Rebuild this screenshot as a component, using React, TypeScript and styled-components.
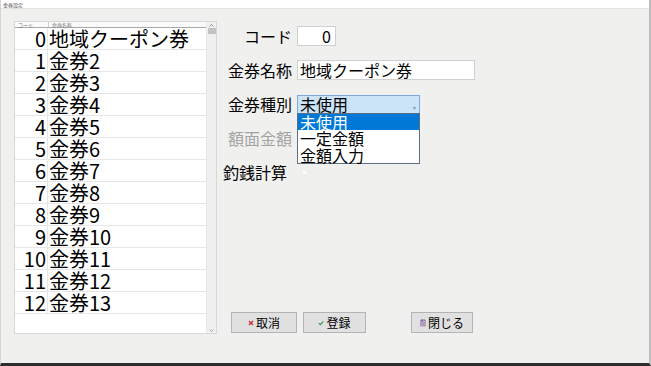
import styled, { createGlobalStyle } from 'styled-components'

const GlobalStyle = createGlobalStyle`
  html, body {
    margin: 0;
    padding: 0;
    background: #f0f0f0;
  }
  * { box-sizing: border-box; }
`

const jp = `"Noto Sans CJK JP", "Noto Sans", sans-serif`

const Window = styled.div`
  width: 651px;
  height: 366px;
  display: flex;
  flex-direction: column;
  background: #f0f0ef;
  border-left: 1px solid #d6d6d6;
  border-right: 2px solid #bdbdbd;
  border-bottom: 3px solid #2e2e2e;
  font-family: ${jp};
  color: #000;
  overflow: hidden;
`

const TitleBar = styled.div`
  height: 9px;
  background: #fff;
  border-bottom: 1px solid #e4e4e4;
  display: flex;
  align-items: center;
  padding-left: 2px;
`

const Title = styled.span`
  font-size: 5px;
  line-height: 5px;
  color: #444;
`

const Body = styled.div`
  flex: 1;
  display: flex;
  padding: 12px 0 0 13px;
`

const ListPanel = styled.div`
  width: 203px;
  height: 313px;
  background: #fff;
  border: 1px solid #d8d8d8;
  display: flex;
`

const ListMain = styled.div`
  flex: 1;
  display: flex;
  flex-direction: column;
`

const HeaderRow = styled.div`
  height: 6px;
  display: flex;
  border-bottom: 1px solid #a8a8a8;
  background: #fafafa;
`

const HeaderCell = styled.div<{ $w?: number }>`
  width: ${p => (p.$w ? `${p.$w}px` : 'auto')};
  flex: ${p => (p.$w ? 'none' : '1')};
  font-size: 5px;
  line-height: 5px;
  color: #777;
  padding-left: 3px;
  border-right: ${p => (p.$w ? '1px solid #cfcfcf' : 'none')};
`

const Row = styled.div`
  height: 22px;
  display: flex;
  border-bottom: 1px solid #e6e6e6;
  font-size: 20px;
  line-height: 21px;
`

const CodeCell = styled.div`
  width: 33px;
  text-align: right;
  padding-right: 1px;
  border-right: 1px solid #e6e6e6;
  font-family: "Liberation Sans Narrow", ${jp};
`

const NameCell = styled.div`
  flex: 1;
  padding-left: 1px;
  white-space: nowrap;
  font-family: "Liberation Sans Narrow", ${jp};
`

const ScrollBar = styled.div`
  width: 10px;
  background: #f0f0f0;
  border-left: 1px solid #e8e8e8;
  display: flex;
  flex-direction: column;
  align-items: center;
`

const ScrollArrow = styled.div`
  height: 6px;
  width: 100%;
  display: flex;
  align-items: center;
  justify-content: center;
`

const ScrollThumb = styled.div`
  width: 8px;
  height: 6px;
  background: #c2c2c2;
`

const ScrollTrack = styled.div`
  flex: 1;
`

const Form = styled.div`
  flex: 1;
  display: flex;
  flex-direction: column;
  padding: 5px 0 30px 4px;
`

const Fields = styled.div`
  display: flex;
  flex-direction: column;
  gap: 14px;
`

const Field = styled.div`
  display: flex;
  align-items: center;
  height: 20px;
  gap: 5px;
`

const Label = styled.div<{ $disabled?: boolean; $inset?: number }>`
  width: 71px;
  text-align: right;
  font-size: 16px;
  white-space: nowrap;
  padding-right: ${p => p.$inset ?? 0}px;
  color: ${p => (p.$disabled ? '#a3a3a3' : '#000')};
`

const TextBox = styled.div<{ $w: number; $right?: boolean }>`
  width: ${p => p.$w}px;
  height: 20px;
  background: #fff;
  border: 1px solid #d0d0d0;
  font-size: 16px;
  line-height: 18px;
  padding: 0 4px 0 2px;
  text-align: ${p => (p.$right ? 'right' : 'left')};
  white-space: nowrap;
`

const Combo = styled.div`
  position: relative;
  width: 123px;
  height: 19px;
  background: #cce4f7;
  border: 1px solid #7fa8d6;
  font-size: 16px;
  line-height: 17px;
  padding-left: 2px;
  display: flex;
  justify-content: space-between;
`

const ComboArrow = styled.span`
  font-size: 6px;
  color: #9a9a9a;
  padding: 3px 3px 0 0;
`

const Popup = styled.div`
  position: absolute;
  top: 17px;
  left: -1px;
  width: 123px;
  background: #fff;
  border: 1px solid #5f6f83;
  z-index: 2;
`

const Option = styled.div<{ $active?: boolean }>`
  height: 16.5px;
  font-size: 16px;
  line-height: 16px;
  padding-left: 2px;
  background: ${p => (p.$active ? '#0078d7' : '#fff')};
  color: ${p => (p.$active ? '#fff' : '#000')};
`

const CheckDot = styled.span`
  width: 3px;
  height: 3px;
  background: #fff;
  margin: 0 0 0 6px;
`

const Buttons = styled.div`
  margin-top: auto;
  display: flex;
  padding-left: 10px;
  gap: 6px;
`

const Button = styled.div<{ $w: number; $gapBefore?: number }>`
  width: ${p => p.$w}px;
  height: 21px;
  margin-left: ${p => p.$gapBefore ?? 0}px;
  background: #e1e1e1;
  border: 1px solid #b4b4b4;
  font-size: 12px;
  display: flex;
  align-items: center;
  justify-content: center;
  gap: 2px;
`

const rows = [
  '地域クーポン券',
  '金券2', '金券3', '金券4', '金券5', '金券6', '金券7',
  '金券8', '金券9', '金券10', '金券11', '金券12', '金券13',
]

const CrossIcon = () => (
  <svg width="6" height="6" viewBox="0 0 6 6">
    <path d="M1 1L5 5M5 1L1 5" stroke="#d22d3a" strokeWidth="1.4" />
  </svg>
)

const CheckIcon = () => (
  <svg width="6" height="6" viewBox="0 0 6 6">
    <path d="M0.8 3.2L2.3 4.7L5.3 1.3" stroke="#2f9a4a" strokeWidth="1.1" fill="none" />
  </svg>
)

const DoorIcon = () => (
  <svg width="6" height="8" viewBox="0 0 6 8">
    <path d="M1 7.5V1H5V7.5" stroke="#6a5a8a" strokeWidth="0.9" fill="none" />
    <path d="M1 1L3 2V7.5" stroke="#7b4fa0" strokeWidth="0.9" fill="none" />
  </svg>
)

const App = () => {
  return (
    <>
      <GlobalStyle />
      <Window>
        <TitleBar>
          <Title>金券設定</Title>
        </TitleBar>
        <Body>
          <ListPanel>
            <ListMain>
              <HeaderRow>
                <HeaderCell $w={34}>コード</HeaderCell>
                <HeaderCell>金券名称</HeaderCell>
              </HeaderRow>
              {rows.map((name, i) => (
                <Row key={i}>
                  <CodeCell>{i}</CodeCell>
                  <NameCell>{name}</NameCell>
                </Row>
              ))}
            </ListMain>
            <ScrollBar>
              <ScrollArrow>
                <svg width="5" height="3" viewBox="0 0 5 3">
                  <path d="M0.5 2.5L2.5 0.5L4.5 2.5" stroke="#777" strokeWidth="0.8" fill="none" />
                </svg>
              </ScrollArrow>
              <ScrollThumb />
              <ScrollTrack />
              <ScrollArrow>
                <svg width="5" height="3" viewBox="0 0 5 3">
                  <path d="M0.5 0.5L2.5 2.5L4.5 0.5" stroke="#999" strokeWidth="0.8" fill="none" />
                </svg>
              </ScrollArrow>
            </ScrollBar>
          </ListPanel>
          <Form>
            <Fields>
              <Field>
                <Label>コード</Label>
                <TextBox $w={39} $right>0</TextBox>
              </Field>
              <Field>
                <Label>金券名称</Label>
                <TextBox $w={178}>地域クーポン券</TextBox>
              </Field>
              <Field>
                <Label>金券種別</Label>
                <Combo>
                  <span>未使用</span>
                  <ComboArrow>▾</ComboArrow>
                  <Popup>
                    <Option $active>未使用</Option>
                    <Option>一定金額</Option>
                    <Option>金額入力</Option>
                  </Popup>
                </Combo>
              </Field>
              <Field>
                <Label $disabled>額面金額</Label>
              </Field>
              <Field>
                <Label $inset={5}>釣銭計算</Label>
                <CheckDot />
              </Field>
            </Fields>
            <Buttons>
              <Button $w={66}>
                <CrossIcon />
                取消
              </Button>
              <Button $w={63}>
                <CheckIcon />
                登録
              </Button>
              <Button $w={62} $gapBefore={39}>
                <DoorIcon />
                閉じる
              </Button>
            </Buttons>
          </Form>
        </Body>
      </Window>
    </>
  )
}

export default App
